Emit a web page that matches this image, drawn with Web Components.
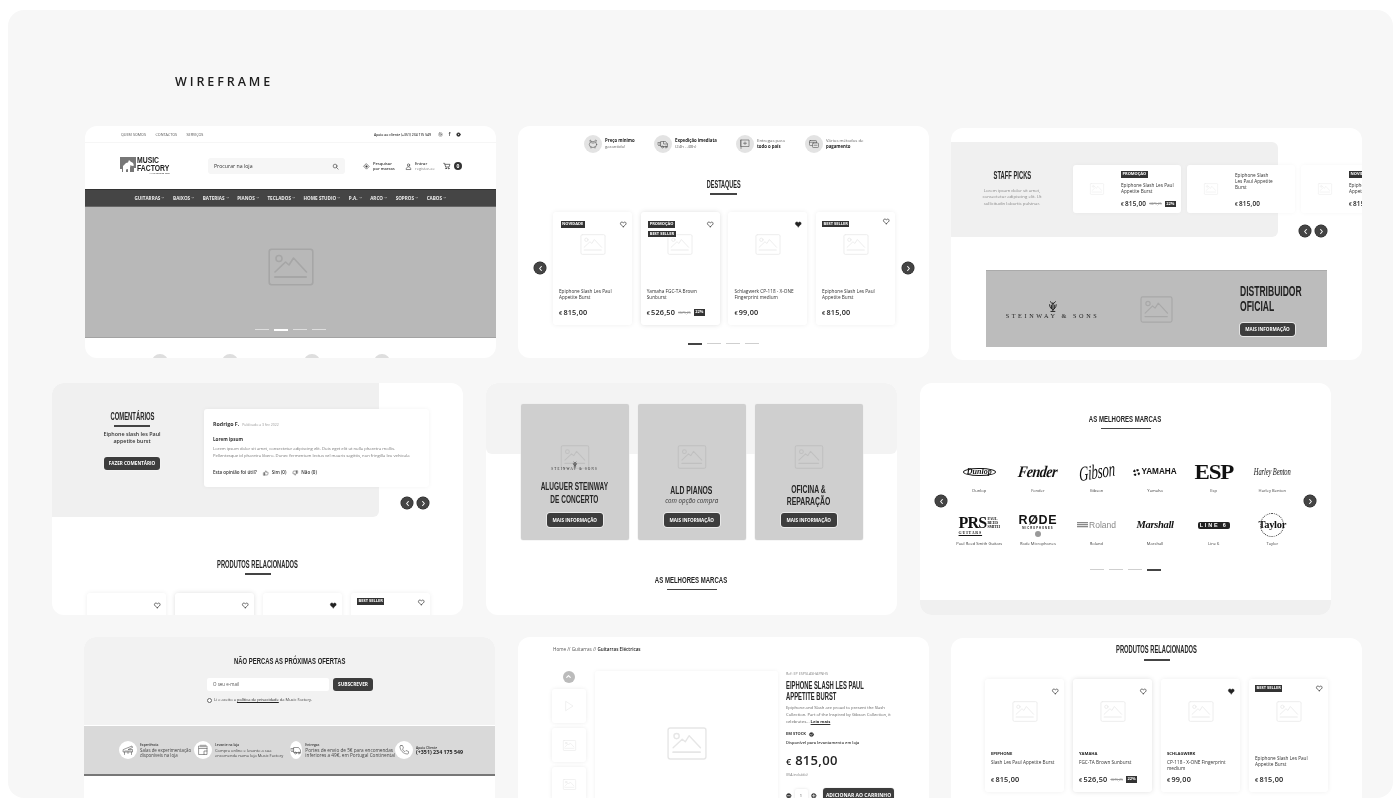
<!DOCTYPE html>
<html lang="pt">
<head>
<meta charset="utf-8">
<title>Wireframe</title>
<style>
	html, body { margin: 0; padding: 0; background: #fff; }
	body { font-family: "Open Sans", "Liberation Sans", sans-serif; color: #222; }
</style>
</head>
<body>
<mf-board>
	<mf-hero-panel></mf-hero-panel>
	<mf-highlights-panel></mf-highlights-panel>
	<mf-staff-panel></mf-staff-panel>
	<mf-comments-panel></mf-comments-panel>
	<mf-services-panel></mf-services-panel>
	<mf-brands-panel></mf-brands-panel>
	<mf-newsletter-panel></mf-newsletter-panel>
	<mf-detail-panel></mf-detail-panel>
	<mf-related-panel></mf-related-panel>
</mf-board>

<script>
const PANEL = `
	:host { display: flex; flex-direction: column; flex: none; position: relative; width: 411px; height: 232px;
		background: #fff; border-radius: 12px; overflow: hidden; }
	* { box-sizing: border-box; }
`;

const ICONS = {
	image: `<rect x="1.2" y="1.2" width="43.6" height="35.6" rx="2.5"/><circle cx="11" cy="10.5" r="3"/><path d="M7 24l10.5-10 3.5 3 4.5-7 13 14"/><path d="M7 29h31" stroke-width="2"/>`,
	search: `<circle cx="10.5" cy="10.5" r="6.5"/><path d="M15.5 15.5L21 21"/>`,
	diamond: `<path d="M12 3l9 9-9 9-9-9z"/><path d="M12 9l3 3-3 3-3-3z" fill="currentColor"/>`,
	user: `<circle cx="12" cy="7" r="4"/><path d="M4 21c0-5 4-8 8-8s8 3 8 8z"/>`,
	cart: `<path d="M2 4h3l3 11h10l3-8H6"/><circle cx="9" cy="19" r="1.5"/><circle cx="17" cy="19" r="1.5"/>`,
	insta: `<rect x="4" y="4" width="16" height="16" rx="4"/><circle cx="12" cy="12" r="4"/>`,
	yt: `<circle cx="12" cy="12" r="9" fill="currentColor"/><path d="M10 8l6 4-6 4z" fill="#fff" stroke="none"/>`,
	heart: `<path d="M12 21s-7.5-4.7-10-9.5C.5 8 2.5 4 6.5 4c2.3 0 4.3 1.2 5.5 3 1.2-1.8 3.2-3 5.5-3 4 0 6 4 4.5 7.5C19.5 16.3 12 21 12 21z"/>`,
	chev: `<path d="M6 9l6 6 6-6"/>`,
	up: `<path d="M7 11l4-8c2 0 2 2 2 3v3h6c1 0 2 1 1.7 2l-1.7 7c-.2 1-1 2-2 2H7z"/><path d="M3 11h4v10H3z"/>`,
	down: `<g transform="rotate(180 12 12)"><path d="M7 11l4-8c2 0 2 2 2 3v3h6c1 0 2 1 1.7 2l-1.7 7c-.2 1-1 2-2 2H7z"/><path d="M3 11h4v10H3z"/></g>`,
	play: `<path d="M6 3l14 9-14 9z"/>`,
	check: `<circle cx="12" cy="12" r="10" fill="currentColor"/><path d="M7 12l4 4 6-7" stroke="#fff" stroke-width="3"/>`,
	plus: `<circle cx="12" cy="12" r="10" fill="currentColor"/><path d="M6 12h12M12 6v12" stroke="#fff" stroke-width="3"/>`,
	minus: `<circle cx="12" cy="12" r="10" fill="currentColor"/><path d="M6 12h12" stroke="#fff" stroke-width="3"/>`,
	piggy: `<ellipse cx="12" cy="13" rx="7.5" ry="6"/><path d="M9 7c-1-2-2-3-3-3 0 2 0 3 1 4M15 6c1-2 3-2 4-1-1 1-1 2-1 3M8 18v2M16 18v2M10 10h4"/>`,
	speed: `<path d="M8 7h9l4 5v5H8zM2 9h5M1 12h6M3 15h4M13 7v5h8"/><circle cx="11" cy="18" r="2"/><circle cx="18" cy="18" r="2"/>`,
	parcel: `<rect x="4" y="4" width="16" height="13"/><path d="M4 4v17M9 10.5h6M12 8v5"/>`,
	cards: `<rect x="3" y="5" width="14" height="10" rx="1.5"/><path d="M3 8.5h14"/><rect x="9" y="10" width="12" height="9" rx="1.5" fill="#e3e3e3"/><path d="M12 14.5h6"/>`,
	piano: `<path d="M3 11L20 4l1 3-9 4h9v5H3zM5 16v5M19 16v5M12 16v3M6 14h12"/>`,
	shop: `<rect x="4" y="4" width="16" height="17"/><path d="M4 9h16M8 2v4M12 2v4M16 2v4M14 21v-7h6"/>`,
	truck: `<path d="M8 7h9l4 5v5H8zM2 9h5M1 12h6M3 15h4"/><circle cx="11" cy="18" r="2"/><circle cx="18" cy="18" r="2"/>`,
	phone: `<path d="M6 3h3l2 5-2 2c1 3 3 5 5 5l2-2 5 2v3c0 1-1 2-2 2C10 20 4 12 4 5c0-1 1-2 2-2z"/>`
};

class Shadowed extends HTMLElement {
	constructor() {
		super();
		this.attachShadow({ mode: "open" });
	}

	connectedCallback() {
		this.shadowRoot.innerHTML = `<style>${this.styles()}</style>${this.render()}`;
	}

	attr(name, fallback = "") {
		return this.hasAttribute(name) ? this.getAttribute(name) : fallback;
	}
}

class MfIcon extends Shadowed {
	styles() {
		return `
		:host { display: inline-block; flex: none; width: ${this.attr("w", 8)}px; height: ${this.attr("h", this.attr("w", 8))}px; line-height: 0; color: ${this.attr("color", "#333")}; }
		svg { width: 100%; height: 100%; display: block; overflow: visible; }
		`;
	}

	render() {
		const name = this.attr("name", "image");
		const box = name === "image" ? "0 0 46 38" : "0 0 24 24";
		const fill = this.hasAttribute("filled") ? "currentColor" : "none";
		const sw = this.attr("sw", name === "image" ? 1.6 : 2);
		return `<svg viewBox="${box}" fill="${fill}" stroke="currentColor" stroke-width="${sw}" stroke-linejoin="round" stroke-linecap="round">${ICONS[name]}</svg>`;
	}
}

// no condensed family is installed, so the display titles are squeezed horizontally
class MfCond extends Shadowed {
	styles() {
		const left = this.attr("align") === "left";
		return `
		:host { display: flex; justify-content: ${left ? "flex-start" : "center"}; color: ${this.attr("color", "#262626")}; }
		span { display: inline-block; flex: none; white-space: nowrap; text-align: ${left ? "left" : "center"};
			font: 700 ${this.attr("size", 10)}px/${this.attr("lh", 14)}px "Liberation Sans", sans-serif;
			transform: scaleX(${this.attr("k", 0.58)}); transform-origin: ${left ? "left" : "center"} center; }
		`;
	}

	render() {
		return `<span><slot></slot></span>`;
	}
}

class MfHeading extends Shadowed {
	styles() {
		return `
		:host { display: block; text-align: center; }
		i { display: block; margin: ${this.attr("gap", 2)}px auto 0; width: ${this.attr("line", 27)}px; height: ${this.attr("bar", 1.5)}px; background: #444; }
		`;
	}

	render() {
		return `<mf-cond size="${this.attr("size", 10)}" lh="${this.attr("lh", 14)}" k="${this.attr("k", 0.58)}"><slot></slot></mf-cond><i></i>`;
	}
}

class MfArrow extends Shadowed {
	styles() {
		return `
		:host { display: flex; align-items: center; justify-content: center; position: absolute; z-index: 3; width: 12px; height: 12px; border-radius: 50%; background: #444; box-shadow: 0 0 0 .5px #222; }
		svg { width: 7px; height: 7px; }
		`;
	}

	render() {
		const d = this.attr("dir") === "right" ? "M9 5l6 7-6 7" : "M15 5l-6 7 6 7";
		return `<svg viewBox="0 0 24 24" fill="none" stroke="#fff" stroke-width="3.5" stroke-linecap="round" stroke-linejoin="round"><path d="${d}"/></svg>`;
	}
}

class MfDots extends Shadowed {
	styles() {
		const light = this.hasAttribute("light");
		return `
		:host { display: flex; justify-content: center; gap: 4.5px; }
		i { display: block; width: 14.5px; height: 1px; background: ${light ? "#dedede" : "#cfcfcf"}; }
		i.on { height: 1.5px; background: ${light ? "#fff" : "#444"}; }
		`;
	}

	render() {
		const active = Number(this.attr("active", 0));
		return [0, 1, 2, 3].map((n) => `<i class="${n === active ? "on" : ""}"></i>`).join("");
	}
}

class MfBadge extends Shadowed {
	styles() {
		return `
		:host { display: inline-block; padding: 0 1.5px; height: 6.5px; background: #333; color: #fff; font: 700 4px/6.5px "Open Sans", sans-serif; white-space: nowrap; box-shadow: 0 0 0 .5px #fff; }
		`;
	}

	render() {
		return `<slot></slot>`;
	}
}

class MfPrice extends Shadowed {
	styles() {
		return `
		:host { display: flex; align-items: center; gap: 3px; font: 600 7.3px/10px "Open Sans", sans-serif; letter-spacing: .2px; color: #222; white-space: nowrap; }
		small { font-size: .76em; margin-right: 1px; }
		s { font-size: 3.4px; font-weight: 400; color: #999; letter-spacing: 0; }
		b { display: inline-block; padding: 0 1.5px; background: #333; color: #fff; font: 700 4px/6.5px "Open Sans", sans-serif; letter-spacing: 0; }
		`;
	}

	render() {
		const old = this.attr("old") ? `<s>${this.attr("old")}</s>` : "";
		const off = this.attr("off") ? `<b>${this.attr("off")}</b>` : "";
		return `<span><small>€</small>${this.attr("value")}</span>${old}${off}`;
	}
}

class MfProduct extends Shadowed {
	styles() {
		const high = this.hasAttribute("high");
		return `
		:host { display: flex; flex-direction: column; flex: none; position: relative; width: 79px; height: 113px; padding: 0 6px; box-sizing: border-box; background: #fff; border-radius: 3px;
			box-shadow: 0 0 5px rgba(0, 0, 0, ${this.hasAttribute("lifted") ? ".13" : ".07"}); }
		.img { margin: 22px auto 0; display: block; }
		.text { box-sizing: border-box; height: 23px; margin-top: 29px; padding-top: ${this.attr("brand") ? 0 : 4}px; font-size: 4.7px; line-height: 6px; color: #333; }
		.brand { font-weight: 700; font-size: 4.2px; margin-bottom: 2px; color: #222; }
		.badges { position: absolute; left: ${high ? 6 : 7.5}px; top: ${this.attr("badge-top", high ? 8.5 : 9)}px; display: flex; flex-direction: column; align-items: flex-start; gap: 3px; }
		.heart { position: absolute; right: 6px; top: ${high ? 6 : 8.5}px; }
		`;
	}

	render() {
		const badges = this.attr("badges").split("|").filter(Boolean).map((b) => `<mf-badge>${b}</mf-badge>`).join("");
		const filled = this.hasAttribute("fav") ? "filled" : "";
		return `
		<mf-icon class="img" name="image" w="26" h="21" color="#ebebeb"></mf-icon>
		<div class="text">${this.attr("brand") ? `<div class="brand">${this.attr("brand")}</div>` : ""}<slot></slot></div>
		<mf-price value="${this.attr("price")}" old="${this.attr("old")}" off="${this.attr("off")}"></mf-price>
		<div class="badges">${badges}</div>
		<mf-icon class="heart" name="heart" w="6.5" ${filled} color="#222" sw="2.4"></mf-icon>
		`;
	}
}

class MfWideCard extends Shadowed {
	styles() {
		return `
		:host { display: flex; flex: none; width: 108px; height: 48px; background: #fff; border-radius: 3px; box-shadow: 0 0 4px rgba(0, 0, 0, .04); }
		.pic { width: 48px; display: flex; align-items: center; justify-content: center; }
		.col { display: flex; flex-direction: column; align-items: flex-start; box-sizing: border-box; width: 54px; padding: 6px 0 4px; font-size: 4.7px; line-height: 6px; color: #333; }
		mf-badge { margin-bottom: 3px; }
		.name { margin-top: 1px; }
		mf-price { margin-top: auto; font-size: 6.4px; }
		`;
	}

	render() {
		const badge = this.attr("badge") ? `<mf-badge>${this.attr("badge")}</mf-badge>` : "";
		return `
		<div class="pic"><mf-icon name="image" w="14" h="12" color="#ececec" sw="2"></mf-icon></div>
		<div class="col">${badge}<div class="name"><slot></slot></div>
		<mf-price value="${this.attr("price")}" old="${this.attr("old")}" off="${this.attr("off")}"></mf-price></div>
		`;
	}
}

class MfBtn extends Shadowed {
	styles() {
		return `
		:host { display: inline-flex; align-items: center; justify-content: center; flex: none; width: ${this.attr("w", 55)}px; height: ${this.attr("h", 13)}px; background: #3d3d3d; color: #fff; border-radius: 3px; font: 700 ${this.attr("size", 4.6)}px/1 "Open Sans", sans-serif; white-space: nowrap; box-shadow: 0 0 0 .7px #f4f4f4; }
		`;
	}

	render() {
		return `<slot></slot>`;
	}
}

class MfSteinway extends Shadowed {
	styles() {
		const k = Number(this.attr("size", 7));
		return `
		:host { display: flex; flex-direction: column; align-items: center; color: #222; }
		svg { width: ${k * 1.9}px; height: ${k * 2}px; }
		span { font: 400 ${k}px/${k * 1.3}px "Liberation Serif", serif; letter-spacing: ${k * 0.42}px; white-space: nowrap; }
		`;
	}

	render() {
		return `<svg viewBox="0 0 24 26" fill="none" stroke="currentColor" stroke-width="2"><path d="M6 3c3 2 4 4 6 6 2-2 3-4 6-6M5 9c0 7 4 9 7 12 3-3 7-5 7-12"/><path d="M12 5v18M9 10v9M15 10v9M7 24h10"/></svg><span>STEINWAY &amp; SONS</span>`;
	}
}

class MfBrand extends Shadowed {
	styles() {
		return `
		:host { display: flex; flex-direction: column; align-items: center; width: 58.6px; }
		.logo { height: 24px; display: flex; align-items: center; justify-content: center; white-space: nowrap; color: #111; }
		.name { margin-top: 4px; font-size: 4.1px; line-height: 6px; color: #444; white-space: nowrap; }
		`;
	}

	render() {
		return `<div class="logo"><slot></slot></div><div class="name">${this.attr("label")}</div>`;
	}
}

class MfBoard extends Shadowed {
	styles() {
		return `
		:host { display: grid; grid-template-columns: repeat(3, 411px); grid-template-rows: repeat(3, 232px); row-gap: 25px; column-gap: 22px; align-content: start;
			margin: 10px 7px 0 8px; height: 788px; padding: 116px 0 0 77px; box-sizing: border-box; position: relative; background: #f7f7f7; border-radius: 16px; overflow: hidden; filter: grayscale(1) blur(.25px); }
		h1 { position: absolute; left: 167px; top: 64px; margin: 0; font: 600 12.5px/16px "Open Sans", sans-serif; letter-spacing: 2.9px; color: #1d1d1d; }
		::slotted(mf-staff-panel) { margin-top: 2px; }
		::slotted(mf-comments-panel) { margin-left: -33px; }
		::slotted(mf-services-panel) { margin-left: -32px; }
		::slotted(mf-brands-panel) { margin-left: -31px; }
		::slotted(mf-newsletter-panel) { margin-left: -1px; margin-top: -3px; }
		::slotted(mf-detail-panel) { margin-top: -3px; }
		::slotted(mf-related-panel) { margin-top: -2px; }
		`;
	}

	render() {
		return `<h1>WIREFRAME</h1><slot></slot>`;
	}
}

class MfHeroPanel extends Shadowed {
	styles() {
		return `${PANEL}
		.top { display: flex; align-items: center; flex: none; height: 17px; padding: 0 35px 0 36px; gap: 9.5px; border-bottom: 1px solid #f6f6f6; font-size: 3.7px; color: #555; }
		.right { display: flex; align-items: center; gap: 4px; margin-left: auto; }
		.help { font-size: 3.4px; font-weight: 600; color: #333; margin-right: 3px; }
		.right b { font-size: 5px; width: 5px; text-align: center; }
		.head { display: flex; align-items: center; flex: none; height: 46px; padding-left: 35px; }
		.logo { display: flex; gap: 1px; width: 50px; }
		.mark { flex: none; width: 16px; height: 15px; }
		.mark svg { display: block; width: 100%; height: 100%; }
		.word { width: 33px; }
		.word small { display: block; font: 400 2.5px/3px "Open Sans", sans-serif; text-align: right; }
		.search { display: flex; align-items: center; justify-content: space-between; flex: none; width: 137px; height: 16px; margin-left: 38px; padding: 0 6px; background: #f6f6f6; border-radius: 3px; font-size: 5.2px; color: #333; }
		.act { display: flex; align-items: center; flex: none; gap: 3px; font-size: 4px; line-height: 5.5px; color: #333; }
		.act b { font-weight: 600; }
		.act span { color: #888; }
		.marcas { margin-left: 18px; width: 39px; }
		.entrar { margin-left: 3px; width: 35px; }
		.cart { margin-left: 3px; }
		.count { width: 8px; height: 8px; border-radius: 50%; background: #333; color: #fff; font: 700 5px/8px "Open Sans", sans-serif; text-align: center; }
		nav { display: flex; align-items: center; justify-content: center; flex: none; height: 18px; gap: 8.2px; background: #454545; border-top: 1px solid #333; border-bottom: 1px solid #666; color: #eee; font-weight: 700; font-size: 4.6px; }
		nav span { display: flex; align-items: center; gap: 1px; white-space: nowrap; }
		.hero { display: flex; flex-direction: column; align-items: center; flex: none; height: 131px; padding-top: 41px; background: #b8b8b8; border-bottom: 1px solid #a3a3a3; }
		.hero mf-dots { margin-top: 43px; }
		.more { display: flex; padding: 16px 0 0 67px; }
		.more i { width: 16px; height: 16px; flex: none; border-radius: 50%; background: #dedede; }
		`;
	}

	render() {
		const menu = ["GUITARRAS", "BAIXOS", "BATERIAS", "PIANOS", "TECLADOS", "HOME STUDIO", "P.A.", "ARCO", "SOPROS", "CABOS"];
		return `
		<div class="top"><span>QUEM SOMOS</span><span>CONTACTOS</span><span>SERVIÇOS</span>
			<div class="right"><span class="help">Apoio ao cliente (+351) 234 175 549</span>
			<mf-icon name="insta" w="5" color="#555"></mf-icon><b>f</b><mf-icon name="yt" w="5"></mf-icon></div></div>
		<div class="head">
			<div class="logo"><div class="mark"><svg viewBox="0 0 16 15"><rect width="16" height="15" fill="#777"/><path d="M3 15V9l3-3 2-.5L9 3l1.5 1.5L13 6l1 2.5-2 .5-1.5-1L10 11v4H8v-3l-2 .5V15z" fill="#fff"/><path d="M0 12h2v3H0zM14 11h2v4h-2z" fill="#fff"/></svg></div><div class="word"><mf-cond align="left" size="9" lh="7.5" k=".76" color="#222">MUSIC<br>FACTORY</mf-cond><small>A tua música aqui</small></div></div>
			<div class="search"><span>Procurar na loja</span><mf-icon name="search" w="7"></mf-icon></div>
			<div class="act marcas"><mf-icon name="diamond" w="7"></mf-icon><div><b>Pesquisar<br>por marcas</b></div></div>
			<div class="act entrar"><mf-icon name="user" w="7"></mf-icon><div><b>Entrar</b><br><span>registar-se</span></div></div>
			<div class="act cart"><mf-icon name="cart" w="8"></mf-icon><div class="count">0</div></div>
		</div>
		<nav>${menu.map((m) => `<span>${m}<mf-icon name="chev" w="3.5" color="#eee" sw="3"></mf-icon></span>`).join("")}</nav>
		<div class="hero"><mf-icon name="image" w="46" h="38" color="#a6a6a6"></mf-icon><mf-dots light active="1"></mf-dots></div>
		<div class="more"><i></i><i style="margin-left:54px"></i><i style="margin-left:66px"></i><i style="margin-left:54px"></i></div>
		`;
	}
}

class MfHighlightsPanel extends Shadowed {
	styles() {
		return `${PANEL}
		.features { display: flex; flex: none; padding: 9px 0 0 66px; }
		.f { display: flex; align-items: center; gap: 3px; font-size: 4.3px; line-height: 5.6px; color: #666; }
		.f b { color: #222; font-weight: 700; }
		.c { display: flex; align-items: center; justify-content: center; width: 18px; height: 18px; border-radius: 50%; background: #e3e3e3; }
		mf-heading { margin-top: 25px; }
		.row { display: flex; gap: 8.7px; margin-top: 17px; padding-left: 35px; }
		mf-dots { margin-top: 18px; }
		`;
	}

	render() {
		const item = (w, icon, text) => `<div class="f" style="width:${w}px"><div class="c"><mf-icon name="${icon}" w="12" color="#555" sw="1.2"></mf-icon></div><div>${text}</div></div>`;
		return `
		<div class="features">
			${item(70, "piggy", "<b>Preço mínimo</b><br>garantido!")}
			${item(82, "speed", "<b>Expedição imediata</b><br>(24h - 48h)")}
			${item(69, "parcel", "Entregas para<br><b>todo o país</b>")}
			${item(80, "cards", "Vários métodos de<br><b>pagamento</b>")}
		</div>
		<mf-heading size="10" k=".55" line="27" bar="2" gap="1">DESTAQUES</mf-heading>
		<div class="row">
			<mf-product badges="NOVIDADE" price="815,00">Epiphone Slash Les Paul Appetite Burst</mf-product>
			<mf-product lifted badges="PROMOÇÃO|BEST SELLER" price="526,50" old="€675,25" off="22%">Yamaha FGC-TA Brown Sunburst</mf-product>
			<mf-product fav price="99,00">Schlagwerk CP-118 - X-ONE Fingerprint medium</mf-product>
			<mf-product high badges="BEST SELLER" price="815,00">Epiphone Slash Les Paul Appetite Burst</mf-product>
		</div>
		<mf-dots active="0"></mf-dots>
		<mf-arrow dir="left" style="left:16px;top:136px"></mf-arrow>
		<mf-arrow dir="right" style="left:384px;top:136px"></mf-arrow>
		`;
	}
}

class MfStaffPanel extends Shadowed {
	styles() {
		return `${PANEL}
		.block { display: flex; flex: none; width: 327px; height: 95px; margin-top: 14px; background: #f0f0f0; border-radius: 0 6px 6px 0; }
		.intro { flex: none; width: 122px; padding-top: 27px; text-align: center; }
		.intro p { margin: 4px auto 0; width: 68px; font-size: 4.3px; line-height: 6.4px; color: #888; }
		.cards { display: flex; gap: 6px; margin-top: 23px; }
		.banner { display: flex; flex: none; align-items: center; width: 341px; height: 77px; margin: 33px 0 0 35px; background: #bcbcbc; border-top: 1px solid #aaa; }
		.lg { flex: none; width: 133px; padding-top: 2px; }
		.banner mf-icon { margin: 0 0 0 21px; }
		.cta { flex: none; margin-left: 67px; padding-top: 2px; }
		.cta mf-btn { margin-top: 5px; }
		`;
	}

	render() {
		return `
		<div class="block">
			<div class="intro"><mf-cond size="10" k=".58">STAFF PICKS</mf-cond><p>Lorem ipsum dolor sit amet, consectetur adipiscing elit. Ut sollicitudin lobortis pulvinar.</p></div>
			<div class="cards">
				<mf-wide-card badge="PROMOÇÃO" price="815,00" old="€875,25" off="22%">Epiphone Slash Les Paul Appetite Burst</mf-wide-card>
				<mf-wide-card price="815,00">Epiphone Slash<br>Les Paul Appetite<br>Burst</mf-wide-card>
				<mf-wide-card badge="NOVIDADE" price="815,00">Epiphone Slash Les Paul Appetite Burst</mf-wide-card>
			</div>
		</div>
		<div class="banner">
			<div class="lg"><mf-steinway size="6.2"></mf-steinway></div>
			<mf-icon name="image" w="33" h="27" color="#a8a8a8"></mf-icon>
			<div class="cta"><mf-cond align="left" size="14" lh="15" k=".61" color="#222">DISTRIBUIDOR<br>OFICIAL</mf-cond><mf-btn>MAIS INFORMAÇÃO</mf-btn></div>
		</div>
		<mf-arrow dir="left" style="left:348px;top:97px"></mf-arrow>
		<mf-arrow dir="right" style="left:364px;top:97px"></mf-arrow>
		`;
	}
}

class MfCommentsPanel extends Shadowed {
	styles() {
		return `${PANEL}
		.block { display: flex; flex: none; width: 327px; height: 134px; background: #f0f0f0; border-radius: 0 0 6px 0; }
		.left { flex: none; width: 152px; padding: 27px 0 0 8px; text-align: center; }
		.left p { margin: 4px 0 0; font-size: 5.4px; font-weight: 600; line-height: 7.5px; color: #333; }
		.left mf-btn { margin-top: 11px; }
		.card { flex: none; width: 225px; height: 78px; margin-top: 26px; padding: 12px 9px; background: #fff; border-radius: 3px; box-shadow: 0 0 4px rgba(0, 0, 0, .05); color: #333; }
		.who { display: flex; align-items: baseline; gap: 3px; font-size: 5.3px; line-height: 6px; }
		.who b { font-weight: 700; }
		.who span { font-size: 3.5px; color: #999; }
		h4 { margin: 8px 0 3px; font-size: 4.6px; line-height: 6px; font-weight: 700; }
		.body { margin: 0; font-size: 4.2px; line-height: 7px; color: #777; white-space: nowrap; }
		.vote { display: flex; align-items: center; margin-top: 10px; font-size: 4.5px; font-weight: 600; line-height: 7px; }
		.vote mf-icon { margin: 0 3px 0 6px; }
		.rel { margin-top: 41px; }
		.row { display: flex; gap: 9px; margin-top: 18px; padding-left: 35px; }
		`;
	}

	render() {
		return `
		<div class="block">
			<div class="left">
				<mf-heading size="10" k=".587" lh="14" line="36" gap="1">COMENTÁRIOS</mf-heading>
				<p>Eiphone slash les Paul<br>appetite burst</p>
				<mf-btn w="56">FAZER COMENTÁRIO</mf-btn>
			</div>
			<div class="card">
				<div class="who"><b>Rodrigo F.</b><span>Publicado a 3 fev 2022</span></div>
				<h4>Lorem ipsum</h4>
				<p class="body">Lorem ipsum dolor sit amet, consectetur adipiscing elit. Duis eget elit ut nulla pharetra mollis.<br>Pellentesque id pharetra libero. Donec fermentum lectus vel mauris sagittis, non fringilla leo vehicula</p>
				<div class="vote">Esta opinião foi útil? <mf-icon name="up" w="6" sw="1.8"></mf-icon>Sim (0) <mf-icon name="down" w="6" sw="1.8"></mf-icon>Não (0)</div>
			</div>
		</div>
		<mf-heading class="rel" size="10.2" k=".565" lh="14" line="26" gap="1" bar="2">PRODUTOS RELACIONADOS</mf-heading>
		<div class="row">
			<mf-product price="815,00"></mf-product>
			<mf-product lifted price="526,50"></mf-product>
			<mf-product fav price="99,00"></mf-product>
			<mf-product high badge-top="5" badges="BEST SELLER" price="815,00"></mf-product>
		</div>
		<mf-arrow dir="left" style="left:349px;top:114px"></mf-arrow>
		<mf-arrow dir="right" style="left:365px;top:114px"></mf-arrow>
		`;
	}
}

class MfService extends Shadowed {
	styles() {
		return `
		:host { display: flex; flex-direction: column; align-items: center; flex: none; width: 107.5px; height: 136px; padding: 41px 0 13px; box-sizing: border-box; background: #cfcfcf; border-radius: 2px; box-shadow: 0 0 0 .5px #eee; }
		.title { align-self: stretch; margin: auto 0 ${this.attr("gap", 7)}px; text-align: center; }
		`;
	}

	render() {
		return `
		<mf-icon name="image" w="30" h="24" color="#c0c0c0"></mf-icon>
		<div class="title"><slot></slot></div>
		<mf-btn w="56" h="14">MAIS INFORMAÇÃO</mf-btn>
		`;
	}
}

class MfServicesPanel extends Shadowed {
	styles() {
		return `${PANEL}
		.strip { flex: none; height: 71px; background: #f3f3f3; border-radius: 0 0 6px 6px; }
		.row { display: flex; flex: none; gap: 9.5px; margin-top: -50px; padding-left: 35px; }
		em { display: block; font: italic 400 6.2px/8px "Open Sans", sans-serif; color: #333; }
		mf-steinway { margin: -8px 0 9px; }
		mf-heading { margin-top: 34px; }
		`;
	}

	render() {
		return `
		<div class="strip"></div>
		<div class="row">
			<mf-service gap="7"><mf-steinway size="3.1"></mf-steinway><mf-cond size="10.5" lh="13" k=".62">ALUGUER STEINWAY<br>DE CONCERTO</mf-cond></mf-service>
			<mf-service gap="8"><mf-cond size="10.5" lh="13" k=".65">ALD PIANOS</mf-cond><em>com opção compra</em></mf-service>
			<mf-service gap="6"><mf-cond size="10.5" lh="12" k=".65">OFICINA &amp;<br>REPARAÇÃO</mf-cond></mf-service>
		</div>
		<mf-heading size="9.5" k=".634" lh="12" line="50" bar="1" gap="3">AS MELHORES MARCAS</mf-heading>
		`;
	}
}

class MfBrandsPanel extends Shadowed {
	styles() {
		return `${PANEL}
		mf-heading { margin-top: 30px; }
		.grid { display: grid; grid-template-columns: repeat(6, 58.6px); row-gap: 19px; margin: 31px 0 0 30px; }
		.dunlop { display: inline-block; padding: 0 3px; border: 1.3px solid #111; border-radius: 50%; font: italic 700 8px/6.5px "Liberation Serif", serif; }
		.fender { display: inline-block; font: italic 700 14px/20px "Liberation Serif", serif; letter-spacing: -.5px; transform: scaleY(1.15) skewX(-8deg); }
		.gibson { display: inline-block; font: italic 400 13px/20px "Liberation Serif", serif; transform: scaleY(1.6) rotate(-6deg); letter-spacing: -.3px; }
		.yamaha { display: flex; align-items: center; gap: 1px; font: 700 8.2px/12px "Liberation Sans", sans-serif; }
		.yamaha i { width: 7px; height: 7px; border-radius: 50%; border: 2px dotted #111; box-sizing: border-box; }
		.esp { display: inline-block; font: 900 20px/18px "Liberation Serif", serif; letter-spacing: -1px; transform: scale(1.15, 1.05); }
		.harley { display: inline-block; font: italic 400 6.5px/12px "Liberation Serif", serif; letter-spacing: -.1px; transform: scaleY(1.5); }
		.prs { display: flex; flex-direction: column; }
		.prs span { display: flex; align-items: center; font: 700 16px/14px "Liberation Serif", serif; letter-spacing: -.8px; }
		.prs small { display: block; font: 700 3.8px/4px "Liberation Serif", serif; letter-spacing: 0; margin-left: 1px; }
		.prs u { font: 700 4px/5px "Liberation Serif", serif; letter-spacing: .8px; }
		.rode { display: flex; flex-direction: column; align-items: center; font: 700 12.5px/13px "Liberation Sans", sans-serif; letter-spacing: .7px; }
		.rode small { font-size: 2.7px; line-height: 3px; letter-spacing: 1px; }
		.rode i { width: 6px; height: 6px; border-radius: 50%; background: #999; margin-top: 1px; }
		.roland { display: flex; align-items: center; gap: 1px; font: 400 8.5px/12px "Liberation Sans", sans-serif; color: #888; }
		.roland i { width: 11px; height: 6px; background: repeating-linear-gradient(#888 0 1px, #ddd 1px 2px); }
		.marshall { font: italic 700 10.5px/14px "Liberation Serif", serif; letter-spacing: -.3px; }
		.line6 { display: inline-block; padding: 0 2px; background: #222; color: #fff; border-radius: 2px; font: 900 5.5px/7px "Liberation Sans", sans-serif; letter-spacing: 1.8px; }
		.taylor { display: flex; align-items: center; justify-content: center; width: 24px; height: 24px; border: 1px dotted #333; border-radius: 50%; font: 700 10.5px/12px "Liberation Serif", serif; letter-spacing: -.3px; }
		mf-dots { margin-top: 22px; }
		.foot { flex: none; height: 15px; margin-top: auto; background: #f0f0f0; }
		`;
	}

	render() {
		return `
		<mf-heading size="9.5" k=".634" lh="12" line="50" bar="1" gap="3">AS MELHORES MARCAS</mf-heading>
		<div class="grid">
			<mf-brand label="Dunlop"><span class="dunlop">Dunlop</span></mf-brand>
			<mf-brand label="Fender"><span class="fender">Fender</span></mf-brand>
			<mf-brand label="Gibson"><span class="gibson">Gibson</span></mf-brand>
			<mf-brand label="Yamaha"><span class="yamaha"><i></i>YAMAHA</span></mf-brand>
			<mf-brand label="Esp"><span class="esp">ESP</span></mf-brand>
			<mf-brand label="Harley Benton"><span class="harley">Harley Benton</span></mf-brand>
			<mf-brand label="Paul Reed Smith Guitars"><span class="prs"><span>PRS<small>PAUL<br>REED<br>SMITH</small></span><u>GUITARS</u></span></mf-brand>
			<mf-brand label="Rode Microphones"><span class="rode">RØDE<small>MICROPHONES</small><i></i></span></mf-brand>
			<mf-brand label="Roland"><span class="roland"><i></i>Roland</span></mf-brand>
			<mf-brand label="Marshall"><span class="marshall">Marshall</span></mf-brand>
			<mf-brand label="Line 6"><span class="line6">LINE 6</span></mf-brand>
			<mf-brand label="Taylor"><span class="taylor">Taylor</span></mf-brand>
		</div>
		<mf-dots active="3"></mf-dots>
		<div class="foot"></div>
		<mf-arrow dir="left" style="left:15px;top:112px"></mf-arrow>
		<mf-arrow dir="right" style="left:384px;top:112px"></mf-arrow>
		`;
	}
}

class MfNewsletterPanel extends Shadowed {
	styles() {
		return `${PANEL}
		.news { flex: none; height: 88px; padding-top: 17px; background: #f2f2f2; }
		.form { display: flex; gap: 4px; align-items: center; margin: 10px 0 0 123px; }
		.input { width: 122px; height: 13px; padding-left: 6px; background: #fff; border-radius: 2px; font-size: 4.5px; line-height: 13px; color: #555; }
		.legal { display: flex; align-items: center; gap: 2px; margin: 6px 0 0 123px; font-size: 4px; line-height: 6px; color: #444; }
		.legal i { flex: none; width: 5px; height: 5px; border: .7px solid #666; border-radius: 50%; background: #fff; }
		.legal u { color: #222; }
		.band { display: flex; flex: none; align-items: center; height: 51px; padding-left: 35px; background: #d9d9d9; border-top: 1px solid #fff; border-bottom: 2px solid #777; }
		.it { display: flex; align-items: center; gap: 3px; line-height: 5.3px; color: #444; white-space: nowrap; }
		.it small { display: block; font-size: 3.3px; line-height: 5.6px; font-weight: 600; color: #333; }
		.it b { font-size: 5.3px; color: #222; }
		.c { display: flex; align-items: center; justify-content: center; width: 18px; height: 18px; border-radius: 50%; background: #fff; }
		`;
	}

	render() {
		const item = (w, fs, icon, label, text) => `<div class="it" style="width:${w}px;font-size:${fs}px"><div class="c"><mf-icon name="${icon}" w="12" color="#555" sw="1.2"></mf-icon></div><div><small>${label}</small>${text}</div></div>`;
		return `
		<div class="news">
			<mf-cond size="9.5" k=".62" color="#222">NÃO PERCAS AS PRÓXIMAS OFERTAS</mf-cond>
			<div class="form"><div class="input">O seu e-mail</div><mf-btn w="40" h="13" size="4.8">SUBSCREVER</mf-btn></div>
			<div class="legal"><i></i><span>Li e aceito a <u>política de privacidade</u> da Music Factory.</span></div>
		</div>
		<div class="band">
			${item(75, 4.4, "piano", "Experiência", "Salas de experimentação<br>disponíveis na loja")}
			${item(96, 4, "shop", "Levante na loja", "Compra online e levante a sua<br>encomenda numa loja Music Factory")}
			${item(105, 4.7, "truck", "Entregas", "Portes de envio de 5€ para encomendas<br>inferiores a 49€, em Portugal Continental")}
			${item(80, 4.3, "phone", "Apoio Cliente", "<b>(+351) 234 175 549</b>")}
		</div>
		`;
	}
}

class MfDetailPanel extends Shadowed {
	styles() {
		return `${PANEL}
		.crumb { margin: 9px 0 0 35px; font-size: 4.6px; line-height: 6px; color: #555; }
		.crumb b { font-weight: 600; color: #222; }
		.main { display: flex; margin: 19px 0 0 34px; }
		.thumbs { display: flex; flex-direction: column; align-items: center; flex: none; width: 34px; gap: 5px; }
		.upb { display: flex; align-items: center; justify-content: center; width: 12px; height: 12px; margin: 0 0 1px; border-radius: 50%; background: #bbb; transform: rotate(180deg); }
		.th { display: flex; align-items: center; justify-content: center; flex: none; width: 34px; height: 34px; border-radius: 3px; background: #fff; box-shadow: 0 0 4px rgba(0, 0, 0, .08); }
		.photo { flex: none; width: 183px; height: 180px; margin-left: 9px; padding-top: 56px; text-align: center; border-radius: 3px; background: #fff; box-shadow: 0 0 4px rgba(0, 0, 0, .06); }
		.info { flex: none; width: 120px; margin-left: 8px; color: #333; }
		.ref { margin: 0; font-size: 3.7px; line-height: 5px; color: #888; }
		.ttl { margin: 4px 0 3px; }
		.desc { margin: 0; font-size: 4.2px; line-height: 6.8px; color: #666; }
		.desc u { font-weight: 700; color: #333; }
		.stock { display: flex; align-items: center; gap: 3px; margin-top: 6px; font-size: 4px; font-weight: 700; line-height: 6px; }
		.avail { margin-top: 3px; font-size: 4px; font-weight: 600; line-height: 6px; }
		.price { margin-top: 6px; font-size: 13px; line-height: 16px; font-weight: 600; letter-spacing: .3px; color: #222; }
		.price small { font-size: 9px; }
		.vat { margin-top: 2px; font-size: 3.6px; line-height: 5px; color: #777; }
		.buy { display: flex; align-items: center; margin-top: 11px; margin-left: 0; }
		.q { width: 13px; height: 13px; margin: 0 3px; border-radius: 2px; text-align: center; background: #fff; box-shadow: 0 0 3px rgba(0, 0, 0, .12); font-size: 4px; line-height: 13px; }
		.buy mf-btn { margin-left: 7px; }
		`;
	}

	render() {
		const thumb = (name, w, h) => `<div class="th"><mf-icon name="${name}" w="${w}" h="${h}" color="#e8e8e8" sw="${name === "play" ? 1.2 : 2}"></mf-icon></div>`;
		return `
		<div class="crumb">Home // Guitarras // <b>Guitarras Eléctricas</b></div>
		<div class="main">
			<div class="thumbs">
				<div class="upb"><mf-icon name="chev" w="7" color="#fff" sw="4"></mf-icon></div>
				${thumb("play", 12, 12)}${thumb("image", 13, 11)}${thumb("image", 13, 11)}
			</div>
			<div class="photo"><mf-icon name="image" w="40" h="33" color="#e6e6e6"></mf-icon></div>
			<div class="info">
				<p class="ref">Ref: EP ESPSLASHAPNHS</p>
				<mf-cond class="ttl" align="left" size="10" lh="11" k=".585">EIPHONE SLASH LES PAUL<br>APPETITE BURST</mf-cond>
				<p class="desc">Epiphone and Slash are proud to present the Slash<br>Collection. Part of the Inspired by Gibson Collection, it<br>celebrates... <u>Leia mais</u></p>
				<div class="stock">EM STOCK <mf-icon name="check" w="5"></mf-icon></div>
				<div class="avail">Disponível para levantamento em loja</div>
				<div class="price"><small>€</small> 815,00</div>
				<div class="vat">(IVA incluído)</div>
				<div class="buy"><mf-icon name="minus" w="5.5"></mf-icon><div class="q">1</div><mf-icon name="plus" w="5.5"></mf-icon><mf-btn w="71" h="14" size="5">ADICIONAR AO CARRINHO</mf-btn></div>
			</div>
		</div>
		`;
	}
}

class MfRelatedPanel extends Shadowed {
	styles() {
		return `${PANEL}
		mf-heading { margin-top: 5px; }
		.row { display: flex; gap: 9px; margin-top: 18px; padding-left: 34px; }
		`;
	}

	render() {
		return `
		<mf-heading size="10.2" k=".565" lh="14" line="26" gap="2" bar="2">PRODUTOS RELACIONADOS</mf-heading>
		<div class="row">
			<mf-product brand="EPIPHONE" price="815,00">Slash Les Paul Appetite Burst</mf-product>
			<mf-product lifted brand="YAMAHA" price="526,50" old="€675,25" off="22%">FGC-TA Brown Sunburst</mf-product>
			<mf-product fav brand="SCHLAGWERK" price="99,00">CP-118 - X-ONE Fingerprint medium</mf-product>
			<mf-product high badges="BEST SELLER" badge-top="6" price="815,00">Epiphone Slash Les Paul Appetite Burst</mf-product>
		</div>
		`;
	}
}

const elements = {
	"mf-icon": MfIcon, "mf-cond": MfCond, "mf-heading": MfHeading, "mf-arrow": MfArrow, "mf-dots": MfDots, "mf-badge": MfBadge,
	"mf-price": MfPrice, "mf-product": MfProduct, "mf-wide-card": MfWideCard, "mf-btn": MfBtn, "mf-steinway": MfSteinway,
	"mf-brand": MfBrand, "mf-service": MfService, "mf-board": MfBoard, "mf-hero-panel": MfHeroPanel,
	"mf-highlights-panel": MfHighlightsPanel, "mf-staff-panel": MfStaffPanel, "mf-comments-panel": MfCommentsPanel,
	"mf-services-panel": MfServicesPanel, "mf-brands-panel": MfBrandsPanel, "mf-newsletter-panel": MfNewsletterPanel,
	"mf-detail-panel": MfDetailPanel, "mf-related-panel": MfRelatedPanel
};

for (const name in elements) {
	customElements.define(name, elements[name]);
}
</script>
</body>
</html>
